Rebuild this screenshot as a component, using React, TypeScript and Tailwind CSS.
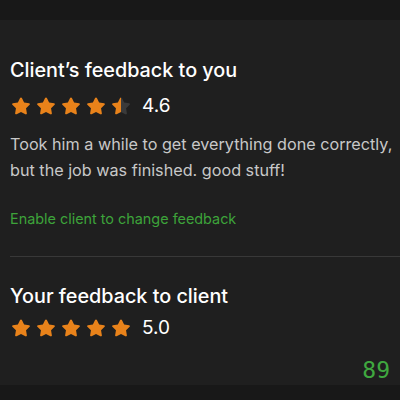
import { useId } from "react";

const STAR =
  "M12 2.6c.4 0 .8.2 1 .6l2.4 4.9 5.4.8c.9.1 1.2 1.2.6 1.8l-3.9 3.8.9 5.4c.2.9-.8 1.6-1.6 1.1L12 18.5l-4.8 2.5c-.8.4-1.8-.2-1.6-1.1l.9-5.4-3.9-3.8c-.6-.6-.3-1.7.6-1.8l5.4-.8 2.4-4.9c.2-.4.6-.6 1-.6z";

function Star({ fill }: { fill: number }) {
  const id = useId();
  return (
    <svg viewBox="0 0 24 24" className="h-[22px] w-[22px]">
      <defs>
        <linearGradient id={id}>
          <stop offset={fill} stopColor="#e8821a" />
          <stop offset={fill} stopColor="#3a3a3a" />
        </linearGradient>
      </defs>
      <path d={STAR} fill={`url(#${id})`} />
    </svg>
  );
}

function Rating({ value }: { value: number }) {
  return (
    <div className="flex items-center">
      <div className="flex gap-[3px]">
        {[0, 1, 2, 3, 4].map((i) => {
          const f = Math.max(0, Math.min(1, value - i));
          // half-step display like the original widget
          return <Star key={i} fill={f >= 1 ? 1 : f > 0 ? 0.5 : 0} />;
        })}
      </div>
      <span className="ml-[10px] text-[19px] text-white">{value.toFixed(1)}</span>
    </div>
  );
}

export default function App() {
  return (
    <div
      className="flex h-[400px] w-[400px] flex-col overflow-hidden bg-[#1f1f1f]"
      style={{ fontFamily: "Inter, 'Liberation Sans', sans-serif" }}
    >
      <div className="h-[20px] shrink-0 bg-[#181818]" />

      <div className="flex-1 pl-[10px]">
        <section className="pr-[6px] pt-[36px]">
          <h2 className="text-[19.8px] font-medium leading-[28px] text-white">
            Client’s feedback to you
          </h2>
          <div className="mt-[8px]">
            <Rating value={4.6} />
          </div>
          <p className="mt-[10px] text-[16.2px] leading-[26px] text-[#c8c8c8]">
            Took him a while to get everything done correctly, but the job was finished. good stuff!
          </p>
          <a className="mt-[26px] block text-[14.4px] leading-[20px] text-[#3da33a]">
            Enable client to change feedback
          </a>
        </section>

        <div className="mt-[27px] h-px bg-[#383838]" />

        <section className="pr-[10px] pt-[25px]">
          <h2 className="text-[19.8px] font-medium leading-[28px] text-white">
            Your feedback to client
          </h2>
          <div className="mt-[4px]">
            <Rating value={5} />
          </div>
        </section>

        <div className="mt-[15px] flex justify-end pr-[10px]">
          <span
            className="text-[23px] leading-[26px] text-[#3fa83f]"
            style={{ fontFamily: "'DejaVu Sans Mono', monospace" }}
          >
            89
          </span>
        </div>
      </div>

      <div className="h-[15px] shrink-0 bg-[#181818]" />
    </div>
  );
}
